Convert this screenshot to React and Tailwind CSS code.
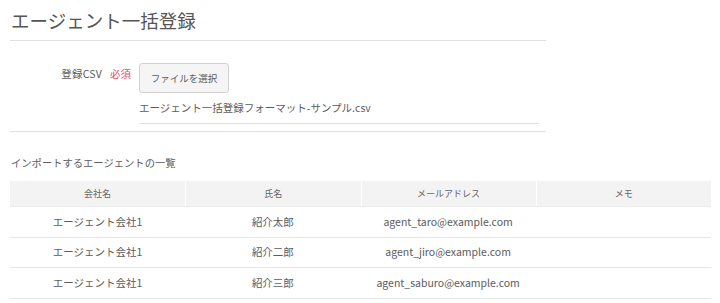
export default function App() {
  const rows = [
    ["エージェント会社1", "紹介太郎", "agent_taro@example.com", ""],
    ["エージェント会社1", "紹介二郎", "agent_jiro@example.com", ""],
    ["エージェント会社1", "紹介三郎", "agent_saburo@example.com", ""],
  ];
  const heads = ["会社名", "氏名", "メールアドレス", "メモ"];
  return (
    <div
      className="bg-white w-[720px] h-[303px] overflow-hidden pl-[10px] text-[#5c5c5c]"
      style={{ fontFamily: '"Noto Sans CJK JP", "Noto Sans", sans-serif' }}
    >
      <h1 className="text-[18.5px] leading-[24px] pt-[8px] pb-[8px] pl-[1px] text-[#555]">
        エージェント一括登録
      </h1>
      <div className="w-[536px] h-px bg-[#e2e2e2]" />
      <div className="flex mt-[22px]">
        <div className="w-[129px] flex justify-end items-start pt-[3px] pr-[8px]">
          <span className="text-[10.5px] leading-[16px] text-[#5c5c5c] tracking-[0.2px]">登録CSV</span>
          <span className="text-[10.5px] leading-[16px] text-[#ea4d6e] ml-[8px]">必須</span>
        </div>
        <div className="flex flex-col">
          <button className="w-[90px] h-[30px] bg-[#f5f5f5] border border-[#d2d2d2] rounded-[3px] text-[9.5px] text-[#5c5c5c] flex items-center justify-center">
            ファイルを選択
          </button>
          <div className="mt-[7px] text-[10.5px] leading-[16px] text-[#5c5c5c]">
            エージェント一括登録フォーマット-サンプル.csv
          </div>
          <div className="mt-[7px] w-[400px] h-px bg-[#e2e2e2]" />
        </div>
      </div>
      <div className="mt-[7px] w-[536px] h-px bg-[#e2e2e2]" />
      <div className="mt-[23px] pl-[1px] text-[10.3px] leading-[16px] text-[#5c5c5c]">
        インポートするエージェントの一覧
      </div>
      <div className="mt-[10px] w-[701px]">
        <div className="grid grid-cols-4 h-[26px] bg-[#f3f3f3] border-b border-[#ebebeb]">
          {heads.map((h, i) => (
            <div
              key={h}
              className={`flex items-center justify-center text-[9px] text-[#666] ${i > 0 ? "border-l border-white" : ""}`}
            >
              {h}
            </div>
          ))}
        </div>
        {rows.map((r, ri) => (
          <div key={ri} className="grid grid-cols-4 h-[30.5px] border-b border-[#e6e6e6]">
            {r.map((c, ci) => (
              <div key={ci} className="flex items-center justify-center text-[10.5px] text-[#5c5c5c]">
                {c}
              </div>
            ))}
          </div>
        ))}
      </div>
    </div>
  );
}
